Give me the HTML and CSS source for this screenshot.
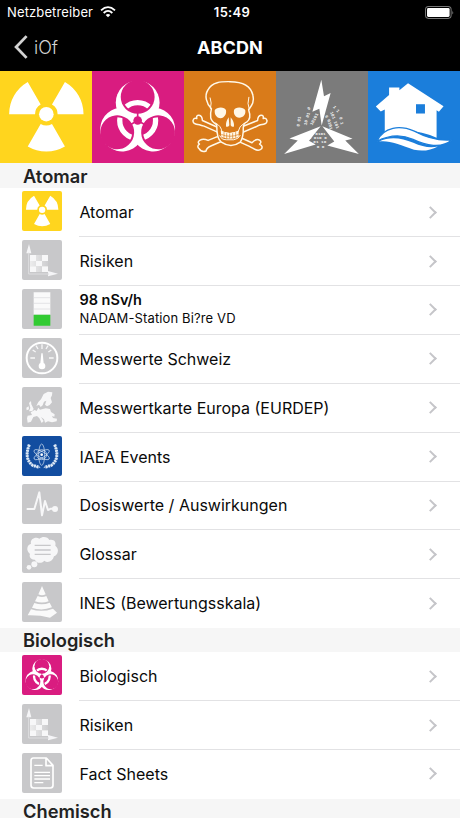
FILE: index.html
```html
<!DOCTYPE html>
<html lang="de">
<head>
<meta charset="utf-8">
<title>ABCDN</title>
<link rel="stylesheet" href="styles.css">
</head>
<body>
<svg class="defs" aria-hidden="true">
  <defs>
    <symbol id="radiation" viewBox="0 4 276 276">
      <g fill="#fff"><circle cx="139" cy="134" r="22"/>
      <path d="M27 134A112 112 0 0 1 83 37L122 104.500A34 34 0 0 0 105 134ZM195 37A112 112 0 0 1 251 134H173A34 34 0 0 0 156 104.500ZM195 231A112 112 0 0 1 83 231L122 163.500A34 34 0 0 0 156 163.500Z"/></g>
    </symbol>
    <mask id="lobes" maskUnits="userSpaceOnUse" x="-140" y="-140" width="280" height="280">
      <g fill="#fff"><circle cy="-54" r="66"/><circle cy="-54" r="66" transform="rotate(120)"/><circle cy="-54" r="66" transform="rotate(240)"/></g>
      <g fill="#000"><circle cy="-71" r="51"/><circle cy="-71" r="51" transform="rotate(120)"/><circle cy="-71" r="51" transform="rotate(240)"/><circle r="13"/></g>
      <g stroke="#000" stroke-width="5"><path d="M0 0V-30"/><path d="M0 0V-30" transform="rotate(120)"/><path d="M0 0V-30" transform="rotate(240)"/></g>
      <g stroke="#000" stroke-width="9"><path d="M0-110V-130"/><path d="M0-110V-130" transform="rotate(120)"/><path d="M0-110V-130" transform="rotate(240)"/></g>
    </mask>
    <clipPath id="holes"><circle cy="-71" r="45"/><circle cy="-71" r="45" transform="rotate(120)"/><circle cy="-71" r="45" transform="rotate(240)"/></clipPath>
    <symbol id="biohazard" viewBox="276 4 276 276">
      <g transform="translate(413 153)">
        <rect x="-140" y="-140" width="280" height="280" fill="#fff" mask="url(#lobes)"/>
        <circle r="54" fill="none" stroke="#fff" stroke-width="16" clip-path="url(#holes)"/>
      </g>
    </symbol>
    <linearGradient id="fade"><stop stop-color="#fff"/><stop offset="1" stop-color="#d0d0d2"/></linearGradient>
    <symbol id="risk" viewBox="67 240 120 120">
      <g fill="#f5f5f7"><path d="M88 252L95 280H80ZM145 333L175 341L145 349Z"/></g>
      <path d="M87 278V342H148" fill="none" stroke="#dedee0" stroke-width="3"/>
      <path d="M91 285h18v18h-18zM127 285h18v18h-18zM109 303h18v16h-18zM91 319h18v17h-18zM127 319h18v17h-18z" fill="#f7f7f8"/>
      <path d="M109 285h18v18h-18zM91 303h18v16h-18zM127 303h18v16h-18zM109 319h18v17h-18z" fill="url(#fade)" opacity=".65"/>
    </symbol>
  </defs>
</svg>

<header class="top">
  <div class="status">
    <div class="carrier"><span>Netzbetreiber</span>
      <svg class="wifi" viewBox="0 0 48 36"><g fill="none" stroke="#fff" stroke-width="5.500"><path d="M3 13Q24-6 45 13"/><path d="M11 21Q24 8 37 21"/></g><path d="M17 27Q24 21 31 27L24 34Z" fill="#fff"/></svg>
    </div>
    <time>15:49</time>
    <svg class="battery" viewBox="0 0 86 38"><rect x="1.500" y="1.500" width="76" height="35" rx="9" fill="none" stroke="#777" stroke-width="3"/><rect x="6" y="6" width="67" height="26" rx="4" fill="#fff"/><path d="M81 13Q86 19 81 25Z" fill="#777"/></svg>
  </div>
  <nav class="nav">
    <a class="back"><svg viewBox="0 0 40 68"><path d="M36 3L6 34L36 65" fill="none" stroke="#d2d2d2" stroke-width="8"/></svg><span>iOf</span></a>
    <h1>ABCDN</h1>
  </nav>
</header>

<div class="tiles">
  <div class="tile yellow"><svg><use href="#radiation"/></svg></div>
  <div class="tile pink"><svg><use href="#biohazard"/></svg></div>
  <div class="tile orange">
    <svg viewBox="12 4 276 276">
      <g fill="#d97b1a" stroke="#fff8e8" stroke-width="4.500" stroke-linejoin="round">
        <path d="M58 166Q36 164 39 152Q42 144 50 147Q48 136 57 137Q66 138 67 153L216 220Q229 206 239 212Q247 218 239 224Q250 230 245 238Q235 247 220 237Q214 234 207 230L72 170Q64 168 58 166Z"/>
        <path d="M242 166Q264 164 261 152Q258 144 250 147Q252 136 243 137Q234 138 233 153L84 213Q70 206 60 212Q50 218 58 224Q49 230 57 238Q64 250 78 245Q78 236 94 229L228 172Q236 168 242 166Z"/>
        <path d="M94 118C78 100 73 78 83 62C96 34 130 36 150 36C186 36 213 49 219 77C224 97 216 107 206 121C211 135 211 151 200 158Q191 161 190 174Q191 202 181 218Q153 238 124 218Q110 210 110 166Q94 155 92 145Q90 132 94 118Z"/>
        <path d="M91 118Q96 100 90 84M208 119Q201 103 207 82M105 160Q124 169 126 188Q148 196 174 188Q178 169 192 162" fill="none" stroke-width="3"/>
      </g>
      <g fill="#fff8e8"><path d="M104 122C110 112 134 111 138 122C140 134 133 145 122 146C108 145 103 134 104 122ZM162 122C165 111 191 112 196 122C198 136 190 143 178 145C166 143 160 134 162 122Z"/>
      <path d="M146 143Q136 158 138 171Q144 174 148 167ZM152 143Q164 158 162 171Q156 174 152 167Z"/></g>
      <path d="M122 183Q150 198 176 183V203Q151 213 124 203Z" fill="#fff8e8"/>
      <path d="M124 195Q150 206 176 195M132 188V205M140 191V207M149 192V208M158 191V207M167 188V205" fill="none" stroke="#d97b1a" stroke-width="2"/>
      <path d="M119 198Q124 211 139 211H161Q176 209 181 197" fill="none" stroke="#fff8e8" stroke-width="3"/>
    </svg>
  </div>
  <div class="tile gray">
    <svg viewBox="12 4 276 276">
      <g class="bits">
        <text transform="translate(82 172) rotate(-82)">0 01</text>
        <text transform="translate(103 168) rotate(-74)">10 01</text>
        <text transform="translate(121 168) rotate(-62)">10101</text>
        <text transform="translate(110 122) rotate(-40)">0</text>
        <text transform="translate(158 141) rotate(50)">0</text>
        <text transform="translate(166 151) rotate(75)">0101</text>
        <text transform="translate(174 128) rotate(68)">101 101</text>
        <text transform="translate(182 112) rotate(50)">1 1</text>
        <text transform="translate(202 143) rotate(78)">0 1</text>
        <text x="130" y="196">0101</text>
        <text x="110" y="209">0 010 0</text>
        <text x="124" y="222">01 10</text>
        <text x="134" y="236">0 0</text>
      </g>
      <g fill="#fff">
        <path d="M148 30L121 127L142 118L149 168L176 70L156 80Z"/>
        <path d="M146 170L52 207L77 213L36 254L131 225L111 214Z"/>
        <path d="M151 170L242 208L220 213L261 254L166 228L187 216Z"/>
      </g>
    </svg>
  </div>
  <div class="tile blue">
    <svg viewBox="288 4 276 276">
      <path d="M311 111L351 76V54H382V62L408 41L515 110L501 127L494 122V205Q437 180 391 186Q360 188 338 199V120L326 126Z" fill="#fff"/>
      <path d="M432 104h27v28h-27z" fill="#1b7edb"/>
      <path d="M314 216C335 170 385 167 427 185C470 208 508 214 540 211C510 239 460 228 423 210C379 190 341 202 314 216Z" fill="#fff" stroke="#1b7edb" stroke-width="4"/>
      <path d="M321 216C353 200 389 205 424 220Q465 239 498 231Q465 249 426 241C380 224 352 212 321 216Z" fill="#fff"/>
    </svg>
  </div>
</div>

<main>
  <h2 class="first">Atomar</h2>
  <ul>
    <li><span class="icon yellow"><svg><use href="#radiation"/></svg></span><div class="cell"><p>Atomar</p><i></i></div></li>
    <li><span class="icon"><svg><use href="#risk"/></svg></span><div class="cell"><p>Risiken</p><i></i></div></li>
    <li><span class="icon"><svg viewBox="67 11 120 120"><path d="M102 21h50v67h-50z" fill="#fafafa"/><path d="M102 37h50M102 54h50M102 71h50" stroke="#dadadd" stroke-width="2"/><path d="M102 88h50v33h-50z" fill="#32cb32"/></svg></span><div class="cell"><p class="reading"><b>98 nSv/h</b><small>NADAM-Station Bi?re VD</small></p><i></i></div></li>
    <li><span class="icon"><svg viewBox="67 158 120 120"><circle cx="127" cy="218" r="46" fill="none" stroke="#fff" stroke-width="6"/><path d="M92 218h14M148 218h14M99 194l9 6M155 194l-9 6M109 181l6 10M145 181l-6 10M127 177v14" stroke="#f7f7f8" stroke-width="4"/><path d="M125 204h4l3 30h-10z" fill="#fff"/><circle cx="127" cy="242" r="10" fill="#fff"/></svg></span><div class="cell"><p>Messwerte Schweiz</p><i></i></div></li>
    <li><span class="icon"><svg viewBox="67 304 120 120"><g fill="#f7f7f8"><path d="M110 361L116 349L124 341L132 325L145 318L158 320L157 329L153 337L157 350L150 358L142 362L136 357L140 345L133 348L129 359L123 364L118 357Z"/><path d="M88 352L94 346L95 356L102 370L98 376L88 377L92 367ZM80 366L87 362L88 371L81 374Z"/><path d="M82 398L84 390L97 388L93 380L105 373L111 376L116 366L121 372L138 368L151 370L154 379L165 386L164 393L157 391L160 397L172 399L171 407L157 410L145 407L136 411L133 401L124 394L132 406L126 412L119 398L112 391L101 394L94 408L84 411Z"/></g></svg></span><div class="cell"><p>Messwertkarte Europa (EURDEP)</p><i></i></div></li>
    <li><span class="icon navy"><svg viewBox="67 15 120 120"><g fill="none" stroke="#dce8f5" stroke-width="2"><ellipse cx="126" cy="71" rx="9" ry="32"/><ellipse cx="126" cy="71" rx="9" ry="26" transform="rotate(60 126 71)"/><ellipse cx="126" cy="71" rx="9" ry="26" transform="rotate(120 126 71)"/><circle cx="126" cy="71" r="15"/><path d="M89 41Q72 83 99 103L122 110M165 41Q182 83 155 103L132 110"/></g><g fill="none" stroke="#dce8f5" stroke-width="9" stroke-dasharray="6 2"><path d="M89 41Q72 83 99 103L119 109M165 41Q182 83 155 103L135 109"/></g><circle cx="126" cy="71" r="4" fill="#fff"/></svg></span><div class="cell"><p>IAEA Events</p><i></i></div></li>
    <li><span class="icon"><svg viewBox="67 162 120 120"><path d="M81 237H104L119 187L127 256L136 213L145 240L154 236H166" fill="none" stroke="#f7f7f8" stroke-width="6" stroke-linejoin="round"/><circle cx="166" cy="237" r="9" fill="#f7f7f8"/></svg></span><div class="cell"><p>Dosiswerte / Auswirkungen</p><i></i></div></li>
    <li><span class="icon"><svg viewBox="67 24 120 120"><g fill="#f7f7f8"><path d="M94 56C90 41 109 34 119 41C130 32 145 36 149 45C164 42 170 52 167 62C181 72 174 91 163 94C159 110 143 115 134 107C123 119 108 112 106 104C91 105 88 92 91 87C78 75 82 60 94 56Z"/><circle cx="104" cy="118" r="9"/><circle cx="88" cy="127" r="7"/></g><path d="M105 61h48M105 75h48M105 88h48" stroke="#c8c8ca" stroke-width="4"/></svg></span><div class="cell"><p>Glossar</p><i></i></div></li>
    <li><span class="icon"><svg viewBox="67 171 120 120"><path d="M127 183L138 208Q127 214 116 208ZM114 213Q127 219 140 213L147 229Q127 236 106 229ZM104 234Q128 242 150 233L157 247Q126 259 97 248ZM94 253Q127 263 160 251L172 263L151 278Q120 270 84 271Z" fill="#fafafa"/></svg></span><div class="cell"><p>INES (Bewertungsskala)</p><i></i></div></li>
  </ul>
  <h2>Biologisch</h2>
  <ul>
    <li><span class="icon pink"><svg><use href="#biohazard"/></svg></span><div class="cell"><p>Biologisch</p><i></i></div></li>
    <li><span class="icon"><svg><use href="#risk"/></svg></span><div class="cell"><p>Risiken</p><i></i></div></li>
    <li><span class="icon"><svg viewBox="67 309 120 120"><g fill="none" stroke="#fff" stroke-width="5" stroke-linejoin="round"><path d="M101 324H140L160 346V406Q160 414 152 414H102Q94 414 94 406V332Q94 324 101 324ZM139 325V347H159"/><path d="M104 346h25M104 367h47M104 377h47M104 387h47M104 398h27" stroke-width="4"/></g></svg></span><div class="cell"><p>Fact Sheets</p><i></i></div></li>
  </ul>
  <h2>Chemisch</h2>
</main>
</body>
</html>
```
FILE: styles.css
```css
* { box-sizing: border-box; }
html { height: 818px; overflow: hidden; }
body {
  margin: 0;
  width: 460px;
  height: 818px;
  overflow: hidden;
  background: #fff;
  color: #0a0a0a;
  font-family: Inter, "Liberation Sans", sans-serif;
}
svg { display: block; }
.defs { position: absolute; width: 0; height: 0; }

.top { height: 71.3px; background: #000; color: #fff; }
.status {
  display: grid;
  grid-template-columns: 1fr auto 1fr;
  align-items: center;
  height: 24px;
  padding: 0 6px 0 7px;
  font-size: 13px;
}
.carrier { display: flex; align-items: center; gap: 7px; letter-spacing: .13px; }
.wifi { width: 16px; height: 12px; }
.status time { font-weight: 600; letter-spacing: .3px; padding-left: 3px; }
.battery { width: 29px; height: 13px; justify-self: end; }
.nav {
  display: grid;
  grid-template-columns: 1fr auto 1fr;
  align-items: center;
  height: 46px;
  padding: 0 14px;
}
.back { display: flex; align-items: center; gap: 6px; color: #d2d2d2; font-size: 18px; font-weight: 300; }
.back svg { width: 14px; height: 24px; }
h1 { margin: 0; font-size: 18px; font-weight: 700; letter-spacing: .1px; }

.tiles { display: grid; grid-template-columns: repeat(5, 1fr); height: 91.7px; }
.tile svg { width: 92px; height: 91.7px; }
.yellow { background: #ffd51e; }
.pink { background: #d91c80; }
.orange { background: #d97b1a; }
.gray { background: #7b7b7b; }
.blue { background: #1b7edb; }
.bits { fill: #f4f4f4; font: 700 13px/1 "Liberation Mono", monospace; }

h2 {
  margin: 0;
  height: 24px;
  padding-left: 23px;
  background: #f6f6f6;
  color: #222;
  font-size: 18.3px;
  font-weight: 600;
  line-height: 25px;
}
h2.first { height: 25.2px; line-height: 27px; }
ul { margin: 0; padding: 0; list-style: none; }
li { display: flex; align-items: center; height: 48.9px; padding-left: 22.4px; }
.icon {
  flex: none;
  width: 40px;
  height: 40px;
  margin-top: -3px;
  border-radius: 2px;
  overflow: hidden;
  background: #c8c8ca;
}
.icon.yellow { background: #ffd51e; }
.icon.pink { background: #d91c80; }
.icon.navy { background: #124da0; }
.icon svg { width: 40px; height: 40px; }
.cell {
  flex: 1;
  display: flex;
  align-items: center;
  justify-content: space-between;
  height: 100%;
  margin-left: 17px;
  padding-right: 25px;
  border-bottom: 1px solid #e2e2e4;
}
li:last-child .cell { border-bottom-color: transparent; }
.cell p { margin: 0; font-size: 16px; line-height: 20px; }
.cell .reading { padding-bottom: 2px; }
.reading b { display: block; font-size: 14.5px; font-weight: 600; line-height: 19px; }
.reading small { display: block; font-size: 13px; line-height: 18px; letter-spacing: .13px; }
.cell i {
  width: 9px;
  height: 9px;
  border: solid #c5c5c9;
  border-width: 2px 2px 0 0;
  transform: rotate(45deg);
}
```
